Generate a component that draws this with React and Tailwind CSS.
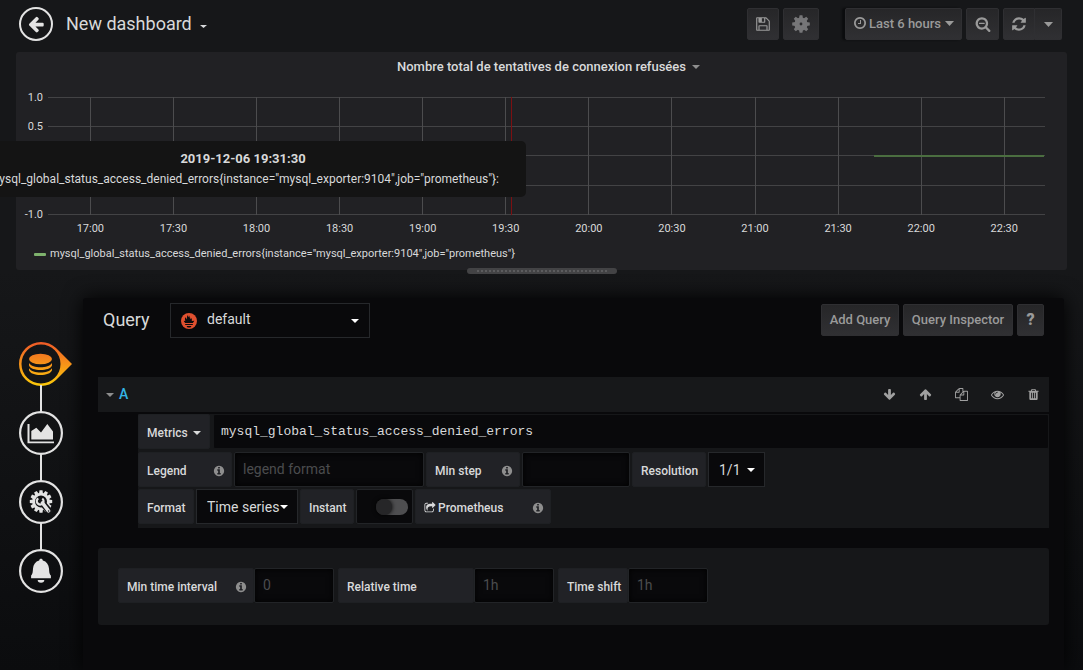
import React from 'react';

const ICONS = {
  arrowLeft: 'M1664 896v128q0 53-32.5 90.5t-84.5 37.5h-704l293 294q38 36 38 90t-38 90l-75 76q-37 37-90 37-52 0-91-37l-651-652q-37-37-37-90 0-52 37-91l651-650q38-38 91-38 52 0 90 38l75 74q38 38 38 91t-38 91l-293 293h704q52 0 84.5 37.5t32.5 90.5z',
  arrowDown: 'M1675 832q0 53-37 90l-651 652q-39 37-91 37-53 0-90-37l-651-652q-38-36-38-90 0-53 38-91l74-75q39-37 91-37 53 0 90 37l294 294v-704q0-52 38-90t90-38h128q52 0 90 38t38 90v704l294-294q37-37 90-37 52 0 91 37l75 75q37 39 37 91z',
  refresh: 'M1639 1056q0 5-1 7-64 268-268 434.5t-478 166.5q-146 0-282.5-55t-243.5-157l-129 129q-19 19-45 19t-45-19-19-45v-448q0-26 19-45t45-19h448q26 0 45 19t19 45-19 45l-137 137q71 66 161 102t187 36q134 0 250-65t186-179q11-17 53-117 8-23 30-23h192q13 0 22.5 9.5t9.5 22.5zm25-800v448q0 26-19 45t-45 19h-448q-26 0-45-19t-19-45 19-45l138-138q-148-137-349-137-134 0-250 65t-186 179q-11 17-53 117-8 23-30 23h-199q-13 0-22.5-9.5t-9.5-22.5v-7q65-268 270-434.5t480-166.5q146 0 284 55.5t245 156.5l130-129q19-19 45-19t45 19 19 45z',
  searchMinus: 'M1088 800v64q0 13-9.5 22.5t-22.5 9.5h-576q-13 0-22.5-9.5t-9.5-22.5v-64q0-13 9.5-22.5t22.5-9.5h576q13 0 22.5 9.5t9.5 22.5zm128 32q0-185-131.5-316.5t-316.5-131.5-316.5 131.5-131.5 316.5 131.5 316.5 316.5 131.5 316.5-131.5 131.5-316.5zm512 832q0 53-37.5 90.5t-90.5 37.5q-54 0-90-38l-343-342q-179 124-399 124-143 0-273.5-55.5t-225-150-150-225-55.5-273.5 55.5-273.5 150-225 225-150 273.5-55.5 273.5 55.5 225 150 150 225 55.5 273.5q0 220-124 399l343 343q37 37 37 90z',
  clock: 'M1024 544v448q0 14-9 23t-23 9h-320q-14 0-23-9t-9-23v-64q0-14 9-23t23-9h224v-352q0-14 9-23t23-9h64q14 0 23 9t9 23zm416 352q0-148-73-273t-198-198-273-73-273 73-198 198-73 273 73 273 198 198 273 73 273-73 198-198 73-273zm224 0q0 209-103 385.5t-279.5 279.5-385.5 103-385.5-103-279.5-279.5-103-385.5 103-385.5 279.5-279.5 385.5-103 385.5 103 279.5 279.5 103 385.5z',
  save: 'M512 1536h768v-384h-768v384zm896 0h128v-896q0-14-10-38.5t-20-34.5l-281-281q-10-10-34-20t-39-10v416q0 40-28 68t-68 28h-576q-40 0-68-28t-28-68v-416h-128v1280h128v-416q0-40 28-68t68-28h832q40 0 68 28t28 68v416zm-384-928v-320q0-13-9.5-22.5t-22.5-9.5h-192q-13 0-22.5 9.5t-9.5 22.5v320q0 13 9.5 22.5t22.5 9.5h192q13 0 22.5-9.5t9.5-22.5zm640 32v928q0 40-28 68t-68 28h-1344q-40 0-68-28t-28-68v-1344q0-40 28-68t68-28h928q40 0 88 20t76 48l280 280q28 28 48 76t20 88z',
  info: 'M1152 1376v-160q0-14-9-23t-23-9h-96v-512q0-14-9-23t-23-9h-320q-14 0-23 9t-9 23v160q0 14 9 23t23 9h96v320h-96q-14 0-23 9t-9 23v160q0 14 9 23t23 9h448q14 0 23-9t9-23zm-128-896v-160q0-14-9-23t-23-9h-192q-14 0-23 9t-9 23v160q0 14 9 23t23 9h192q14 0 23-9t9-23zm640 416q0 209-103 385.5t-279.5 279.5-385.5 103-385.5-103-279.5-279.5-103-385.5 103-385.5 279.5-279.5 385.5-103 385.5 103 279.5 279.5 103 385.5z',
  copy: 'M1696 384q40 0 68 28t28 68v1216q0 40-28 68t-68 28h-960q-40 0-68-28t-28-68v-288h-544q-40 0-68-28t-28-68v-672q0-40 20-88t48-76l408-408q28-28 76-48t88-20h416q40 0 68 28t28 68v328q68-40 128-40h416zm-544 213l-299 299h299v-299zm-640-384l-299 299h299v-299zm196 647l316-316v-416h-384v416q0 40-28 68t-68 28h-416v640h512v-256q0-40 20-88t48-76zm956 804v-1152h-384v416q0 40-28 68t-68 28h-416v640h896z',
  eye: 'M1664 960q-152-236-381-353 61 104 61 225 0 185-131.5 316.5t-316.5 131.5-316.5-131.5-131.5-316.5q0-121 61-225-229 117-381 353 133 205 333.5 326.5t434.5 121.5 434.5-121.5 333.5-326.5zm-720-384q0-20-14-34t-34-14q-125 0-214.5 89.5t-89.5 214.5q0 20 14 34t34 14 34-14 14-34q0-86 61-147t147-61q20 0 34-14t14-34zm848 384q0 34-20 69-140 230-376.5 368.5t-499.5 138.5-499.5-139-376.5-368q-20-35-20-69t20-69q140-229 376.5-368t499.5-139 499.5 139 376.5 368q20 35 20 69z',
  trash: 'M704 1376v-704q0-14-9-23t-23-9h-64q-14 0-23 9t-9 23v704q0 14 9 23t23 9h64q14 0 23-9t9-23zm256 0v-704q0-14-9-23t-23-9h-64q-14 0-23 9t-9 23v704q0 14 9 23t23 9h64q14 0 23-9t9-23zm256 0v-704q0-14-9-23t-23-9h-64q-14 0-23 9t-9 23v704q0 14 9 23t23 9h64q14 0 23-9t9-23zm-544-992h448l-48-117q-7-9-17-11h-317q-10 2-17 11zm928 32v64q0 14-9 23t-23 9h-96v948q0 83-47 143.5t-113 60.5h-832q-66 0-113-58.5t-47-141.5v-952h-96q-14 0-23-9t-9-23v-64q0-14 9-23t23-9h309l70-167q15-37 54-63t79-26h320q40 0 79 26t54 63l70 167h309q14 0 23 9t9 23z',
  share: 'M1472 989v259q0 119-84.5 203.5t-203.5 84.5h-832q-119 0-203.5-84.5t-84.5-203.5v-832q0-119 84.5-203.5t203.5-84.5h255q13 0 22.5 9.5t9.5 22.5q0 27-26 32-77 26-133 60-10 4-16 4h-112q-66 0-113 47t-47 113v832q0 66 47 113t113 47h832q66 0 113-47t47-113v-214q0-19 18-29 28-13 54-37 16-16 35-8 21 9 21 29zm237-496l-384 384q-18 19-45 19-12 0-25-5-39-17-39-59v-192h-160q-323 0-438 131-119 137-74 473 3 23-20 34-8 2-12 2-16 0-26-13-10-14-21-31t-39.5-68.5-49.5-99.5-38.5-114-17.5-122q0-49 3.5-91t14-90 28-88 47-81.5 68.5-74 94.5-61.5 124.5-48.5 159.5-30.5 196.5-11h160v-192q0-42 39-59 13-5 25-5 26 0 45 19l384 384q19 19 19 45t-19 45z',
};

function Icon({ name, className = '' }) {
  return (
    <svg viewBox="0 0 1792 1792" fill="currentColor" aria-hidden="true" className={`shrink-0 ${className}`}>
      <path d={ICONS[name]} />
    </svg>
  );
}

function Caret({ size = 'h-1 w-2', className = '' }) {
  return (
    <svg viewBox="0 0 8 4" preserveAspectRatio="none" fill="currentColor" aria-hidden="true" className={`shrink-0 ${size} ${className}`}>
      <path d="M0 0h8L4 4z" />
    </svg>
  );
}

const TEETH = [0, 45, 90, 135, 180, 225, 270, 315];

function Cog() {
  return (
    <svg viewBox="0 0 18 18" aria-hidden="true" className="size-[18px] text-[#767678]">
      {TEETH.map((a) => (
        <path key={a} d="M7 3.6 7.600 0.200h2.800l.6 3.400z" fill="currentColor" transform={`rotate(${a} 9 9)`} />
      ))}
      <circle cx="9" cy="9" r="4" fill="none" stroke="currentColor" strokeWidth="5.200" />
    </svg>
  );
}

const buttonBase =
  'flex h-8 cursor-pointer items-center justify-center rounded-[2px] border border-[#2f2f32] bg-linear-to-b from-[#262628] to-[#303033] text-[13px] font-medium text-[#9a9a9a]';

function Toolbar() {
  return (
    <header className="flex items-center justify-between px-[19px] pt-[7px] pb-[11px]">
      <div className="flex items-center">
        <button type="button" aria-label="Go back" className="flex size-[34px] cursor-pointer items-center justify-center rounded-full border-2 border-[#e3e3e3] text-[#e3e3e3]">
          <Icon name="arrowLeft" className="size-[18px]" />
        </button>
        <button type="button" className="ml-[13px] flex cursor-pointer items-center gap-2 text-lg text-[#d8d9da]">
          New dashboard
          <Caret size="h-[3px] w-[7px]" className="mt-1" />
        </button>
      </div>
      <div className="mr-[2px] flex items-center gap-1">
        <button type="button" aria-label="Save dashboard" className={`${buttonBase} w-8`}>
          <Icon name="save" className="size-4" />
        </button>
        <button type="button" aria-label="Dashboard settings" className={`${buttonBase} w-9`}>
          <Cog />
        </button>
        <button type="button" className={`${buttonBase} ml-[22px] w-[117px] shadow-[-3px_0_2px_#0b0c0e]`}>
          <Icon name="clock" className="mb-[2px] size-[14px]" />
          <span className="ml-[2px]">Last 6 hours</span>
          <Caret size="h-[5px] w-[9px]" className="mb-[2px] ml-1" />
        </button>
        <button type="button" aria-label="Zoom out" className={`${buttonBase} w-[33px]`}>
          <Icon name="searchMinus" className="size-4" />
        </button>
        <div className="flex">
          <button type="button" aria-label="Refresh" className={`${buttonBase} w-8 rounded-r-none`}>
            <Icon name="refresh" className="size-4" />
          </button>
          <button type="button" aria-label="Refresh interval" className={`${buttonBase} w-[27px] rounded-l-none border-l-0`}>
            <Caret size="h-[5px] w-[9px]" />
          </button>
        </div>
      </div>
    </header>
  );
}

const TICKS = ['17:00', '17:30', '18:00', '18:30', '19:00', '19:30', '20:00', '20:30', '21:00', '21:30', '22:00', '22:30'];
const LEVELS = [
  { y: 1, label: '1.0' },
  { y: 30, label: '0.5' },
  { y: 59 },
  { y: 89 },
  { y: 118, label: '-1.0' },
];
const SERIES = 'mysql_global_status_access_denied_errors{instance="mysql_exporter:9104",job="prometheus"}';

function Graph() {
  return (
    <svg role="img" aria-label="Refused connection attempts over time" className="block h-[142px] w-full overflow-visible">
      {LEVELS.map((l) => (
        <g key={l.y}>
          <rect x="0" y={l.y - 1} width="100%" height="1" fill="#434345" />
          {l.label && (
            <text x="-5" y={l.y + 3} textAnchor="end" className="fill-[#d8d9da] text-[11px]">
              {l.label}
            </text>
          )}
        </g>
      ))}
      {TICKS.map((t, i) => {
        const x = `${4.25 + i * 8.333}%`;
        return (
          <g key={t}>
            <line x1={x} x2={x} y1="0" y2="118" stroke="#4c4c4e" shapeRendering="crispEdges" />
            <text x={x} y="135" textAnchor="middle" className="fill-[#d8d9da] text-[11px]">
              {t}
            </text>
          </g>
        );
      })}
      <line x1="46.5%" x2="46.5%" y1="0" y2="118" stroke="#7c1012" shapeRendering="crispEdges" />
      <line x1="82.85%" x2="99.9%" y1="59" y2="59" stroke="#4b6e40" strokeWidth="2" />
    </svg>
  );
}

function Panel() {
  return (
    <section className="relative mx-4 rounded-[3px] bg-[#212124] pb-[7px]">
      <h2 className="pt-[5px] text-[13px] leading-5 font-medium text-[#d8d9da]">
        <button type="button" className="mx-auto flex cursor-pointer items-center gap-[6px]">
          Nombre total de tentatives de connexion refusées
          <Caret className="-mr-[14px] text-[#8e8e8e]" />
        </button>
      </h2>
      <div className="mr-[22px] ml-8 pt-5">
        <Graph />
      </div>
      <div className="flex items-center gap-1 px-[18px] pt-[6px] text-[11px] leading-[18px] text-[#d8d9da]">
        <span className="h-[3px] w-3 rounded-[1px] bg-[#7eb26d]" />
        {SERIES}
      </div>
      <div role="tooltip" className="absolute top-[89px] -left-[56px] w-[566px] rounded-[5px] bg-[#141414] pt-[7px] pb-[7px] text-xs text-[#d8d9da]">
        <div className="text-center text-[13px] leading-[21px] font-bold">2019-12-06 19:31:30</div>
        <div className="pr-[27px] text-right leading-[21px] whitespace-nowrap">{SERIES}:</div>
      </div>
      <div className="absolute inset-x-0 -bottom-1 mx-auto flex h-[6px] w-[150px] items-center rounded-[3px] bg-[#434345] px-[10px]">
        <div className="w-full border-t-2 border-dotted border-[#5c5c5e]" />
      </div>
    </section>
  );
}

function TabShape({ kind }) {
  if (kind === 'queries') {
    return (
      <svg viewBox="0 0 54 44" aria-hidden="true" className="h-11 w-[54px]">
        <defs>
          <linearGradient id="flame" x1="0" y1="0" x2="0" y2="44" gradientUnits="userSpaceOnUse">
            <stop offset="0" stopColor="#f05a28" />
            <stop offset="1" stopColor="#fbca0a" />
          </linearGradient>
        </defs>
        <g fill="url(#flame)">
          <path fillRule="evenodd" d="M22 0a22 22 0 1 0 0 44c6 0 11-2.300 15-6L53 22 37 6a22 22 0 0 0-15-6zm0 2.500a19.500 19.500 0 1 1 0 39 19.500 19.500 0 0 1 0-39z" />
          <ellipse cx="21.500" cy="17" rx="11.500" ry="5.300" />
          <path d="M10 21c2 3 6.500 4.200 11.500 4.200S31 24 33 21v2.400c-1 3-6 4.500-11.500 4.500S11 26.400 10 23.400z" />
          <path d="M10 26.300c2 3 6.500 4.200 11.500 4.200s9.500-1.200 11.500-4.200v2c-1 3.200-6 4.700-11.500 4.700S11 31.500 10 28.300z" />
        </g>
      </svg>
    );
  }
  return (
    <svg viewBox="0 0 44 44" aria-hidden="true" className="size-11 text-[#e3e3e3]">
      <circle cx="22" cy="22" r="20.900" fill="none" stroke="currentColor" strokeWidth="2.200" />
      {kind === 'visualization' && (
        <g fill="currentColor">
          <path d="M8.500 13h2v17.500H35v1.800H8.500z" />
          <path d="M12.300 20l5-3.200 4.700 4.700L28.300 13l5.700 7.500V28.500H12.300z" />
        </g>
      )}
      {kind === 'general' && (
        <g>
          {[0, 30, 60, 90, 120, 150, 180, 210, 240, 270, 300, 330].map((a) => (
            <path key={a} d="M20 14 20.500 10.300h3l.5 3.700z" fill="currentColor" transform={`rotate(${a} 22 21.500)`} />
          ))}
          <circle cx="22" cy="21.500" r="7.400" fill="none" stroke="currentColor" strokeWidth="2.800" />
          <path d="M23 22.500l7.500 9" stroke="#141517" strokeWidth="6.500" strokeLinecap="round" />
          <path d="M19.300 18.300a3.400 3.400 0 1 0 4 .2" fill="none" stroke="currentColor" strokeWidth="2.200" />
          <path d="M23.500 23l6 7.800" stroke="currentColor" strokeWidth="3.600" strokeLinecap="round" />
          <circle cx="29.600" cy="31" r=".8" fill="#141517" />
        </g>
      )}
      {kind === 'alert' && (
        <g fill="currentColor">
          <path d="M22 9.800c1 0 1.700.7 1.800 1.600 3.800 1 5.900 4 6.200 8 .3 4 .3 5.300 1.900 7.100v2.700H12.100v-2.700c1.600-1.800 1.600-3.100 1.900-7.100.3-4 2.400-7 6.200-8 .1-.9.800-1.600 1.800-1.600z" />
          <path d="M18.700 31h6.600a3.300 2.800 0 0 1-6.600 0z" />
        </g>
      )}
    </svg>
  );
}

const TABS = [
  { kind: 'queries', label: 'Queries' },
  { kind: 'visualization', label: 'Visualization' },
  { kind: 'general', label: 'General' },
  { kind: 'alert', label: 'Alert' },
];

function SideTabs() {
  return (
    <nav className="z-10 w-16 shrink-0 pt-11">
      <ul className="flex flex-col gap-[25px]">
        {TABS.map((t, i) => (
          <li key={t.kind} className="relative">
            <button type="button" aria-label={t.label} className="block cursor-pointer">
              <TabShape kind={t.kind} />
            </button>
            {i > 0 && <span className="absolute -top-[26px] left-[21px] h-[27px] w-[2px] bg-[#e3e3e3]" />}
          </li>
        ))}
      </ul>
    </nav>
  );
}

function PrometheusLogo() {
  return (
    <svg viewBox="0 0 16 16" aria-hidden="true" className="size-4 shrink-0">
      <circle cx="8" cy="8" r="8" fill="#e0502f" />
      <path d="M8 14.600c1.300 0 2.300-.8 2.300-1.700H5.700c0 .9 1 1.700 2.300 1.700zM4.200 10.900h7.600v1.200H4.200zM4.200 10.100c-.9-1-1.300-1.600-1.500-2.300l1.700.3c-.7-1.500-.6-2.400.1-4 .2 1 .8 1.300 1.100 2.300.5-1.700.2-2.800 1.200-4.400.1 1.200.3 1.700.8 2.300.3-.6.200-1.300.3-2 .8 1.200.9 2.700 1.400 4 .5-.5.600-1.100.5-1.800 1.100 1.500 1.400 2.200.9 3.600l2.600-.3c-.2.700-.7 1.400-1.500 2.300z" fill="#0b0c0e" />
    </svg>
  );
}

const label =
  'flex h-[35px] items-center rounded-[2px] border border-[#1e2023] bg-[#212226] pt-[2px] pr-[6px] pl-2 text-xs font-medium whitespace-nowrap text-[#d8d9da]';
const field =
  'h-[35px] min-w-0 rounded-[2px] border border-[#222427] bg-[#09090b] px-2 pb-[2px] text-sm text-[#d8d9da] shadow-[inset_0_0_6px_#000] outline-none placeholder:text-[#4b4c4e]';

function InfoIcon() {
  return <Icon name="info" className="ml-auto size-3 text-[#8e8e8e]" />;
}

function Picker({ id, name, value, className }) {
  return (
    <div className={`flex h-[35px] items-center border border-[#26282b] bg-[#09090b] pr-[9px] pl-[10px] text-sm text-[#d8d9da] ${className}`}>
      <select id={id} aria-label={name} className="min-w-0 flex-1 cursor-pointer appearance-none outline-none">
        <option>{value}</option>
      </select>
      <Caret className="pointer-events-none text-white" />
    </div>
  );
}

const ACTIONS = [
  { icon: 'arrowDown', text: 'Move query down', size: 'size-[13px]' },
  { icon: 'arrowDown', text: 'Move query up', size: 'size-[13px] rotate-180' },
  { icon: 'copy', text: 'Duplicate query', size: 'size-[13px]' },
  { icon: 'eye', text: 'Toggle query', size: 'size-[13px]' },
  { icon: 'trash', text: 'Remove query', size: 'size-[13px]' },
];

function QueryRow() {
  return (
    <section>
      <div className="mb-[2px] flex h-[35px] items-center justify-between bg-[#17181a] pr-[9px] pl-2">
        <button type="button" className="flex cursor-pointer items-center gap-[5px] pb-[2px] text-sm font-medium text-[#33b5e5]">
          <Caret className="mt-[2px] text-[#8e8e8e]" />
          A
        </button>
        <div className="flex items-center gap-[23px] text-[#a0a0a0]">
          {ACTIONS.map((a) => (
            <button key={a.text} type="button" aria-label={a.text} className="cursor-pointer">
              <Icon name={a.icon} className={a.size} />
            </button>
          ))}
        </div>
      </div>
      <div className="ml-10 flex flex-col bg-[#161719] pb-1">
        <div className="mb-[3px] flex gap-[3px]">
          <button type="button" className={`${label} w-[72px] cursor-pointer justify-between`}>
            Metrics
            <Caret className="mr-[2px]" />
          </button>
          <input aria-label="Query expression" defaultValue="mysql_global_status_access_denied_errors" className="h-[35px] min-w-0 flex-1 rounded-[2px] border border-[#161719] bg-[#09090b] px-[7px] font-['Liberation_Mono',monospace] text-[13px] text-[#d8d9da] outline-none" />
        </div>
        <div className="mb-[2px] flex gap-[2px]">
          <label htmlFor="legend" className={`${label} w-[94px]`}>
            Legend
            <InfoIcon />
          </label>
          <input id="legend" placeholder="legend format" className={`${field} w-[190px]`} />
          <label htmlFor="step" className={`${label} w-[94px]`}>
            Min step
            <InfoIcon />
          </label>
          <input id="step" className={`${field} w-[108px]`} />
          <label htmlFor="resolution" className={`${label} w-[74px]`}>
            Resolution
          </label>
          <Picker id="resolution" name="Resolution" value="1/1" className="w-[57px]" />
        </div>
        <div className="flex gap-[2px]">
          <label htmlFor="format" className={`${label} w-14`}>
            Format
          </label>
          <Picker id="format" name="Format" value="Time series" className="w-[102px]" />
          <label htmlFor="instant" className={`${label} w-[54px]`}>
            Instant
          </label>
          <div className="flex h-[35px] w-[57px] items-center justify-end rounded-[2px] border border-[#222427] bg-[#09090b] pr-1">
            <input id="instant" type="checkbox" className="h-4 w-8 cursor-pointer appearance-none rounded-full bg-[#4e4e50] before:block before:size-4 before:rounded-full before:bg-[#262628] before:shadow-[0_0_4px_#000]" />
          </div>
          <a href="#graph" className={`${label} w-[136px]`}>
            <Icon name="share" className="mr-[2px] size-3" />
            Prometheus
            <InfoIcon />
          </a>
        </div>
      </div>
    </section>
  );
}

function QueryOptions() {
  return (
    <section className="mt-5 flex gap-1 rounded-[3px] bg-[#161719] px-5 pt-5 pb-[22px]">
      <div className="flex">
        <label htmlFor="interval" className={`${label} w-[136px]`}>
          Min time interval
          <InfoIcon />
        </label>
        <input id="interval" placeholder="0" className={`${field} w-20`} />
      </div>
      <div className="flex">
        <label htmlFor="relative" className={`${label} w-[136px]`}>
          Relative time
        </label>
        <input id="relative" placeholder="1h" className={`${field} w-20`} />
      </div>
      <div className="flex">
        <label htmlFor="shift" className={`${label} w-[70px]`}>
          Time shift
        </label>
        <input id="shift" placeholder="1h" className={`${field} w-20`} />
      </div>
    </section>
  );
}

export default function App() {
  return (
    <div className="flex min-h-screen flex-col overflow-hidden bg-[#161719] font-[Roboto,sans-serif]">
      <Toolbar />
      <Panel />
      <div className="flex flex-1 bg-linear-to-b from-[#161719] to-[#0b0c0e] pt-7 pr-[19px] pl-[19px]">
        <SideTabs />
        <main className="min-w-0 flex-1 rounded-t-[3px] bg-[#09090b] px-[15px] shadow-[0_0_20px_#000]">
          <div className="flex items-start justify-between px-[5px] pt-[5px]">
            <div className="flex items-center">
              <h1 className="w-[67px] pb-[2px] text-lg text-[#d8d9da]">Query</h1>
              <div className="flex h-[35px] w-[200px] items-center border border-[#26282b] px-[10px] text-sm text-[#d8d9da]">
                <PrometheusLogo />
                <select aria-label="Data source" className="ml-[10px] min-w-0 flex-1 cursor-pointer appearance-none pb-[3px] outline-none">
                  <option>default</option>
                </select>
                <Caret className="pointer-events-none text-white" />
              </div>
            </div>
            <div className="flex gap-1 pt-[1px]">
              <button type="button" className={`${buttonBase} w-[78px]`}>Add Query</button>
              <button type="button" className={`${buttonBase} w-[110px]`}>Query Inspector</button>
              <button type="button" aria-label="Help" className={`${buttonBase} w-[27px]`}>
                <span className="text-base font-black">?</span>
              </button>
            </div>
          </div>
          <div className="pt-[39px]">
            <QueryRow />
            <QueryOptions />
          </div>
        </main>
      </div>
    </div>
  );
}
